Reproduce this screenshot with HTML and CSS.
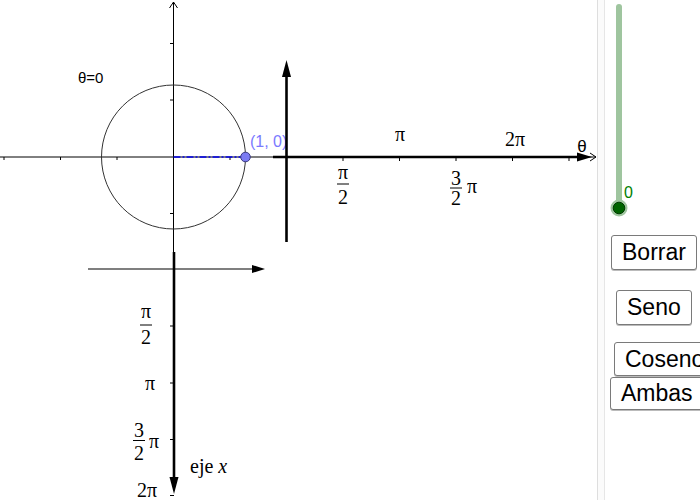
FILE: index.html
```html
<!DOCTYPE html>
<html>
<head>
<meta charset="utf-8">
<link rel="stylesheet" href="styles.css">
</head>
<body>
<div class="app">
  <svg class="board" width="597" height="500" viewBox="0 0 597 500">
    <!-- main thin axes -->
    <line class="thin" x1="0" y1="157" x2="596" y2="157"/>
    <polyline class="open" points="590,153 596,157 590,161"/>
    <line class="thin" x1="173.5" y1="2" x2="173.5" y2="255"/>
    <polyline class="open" points="169.5,8 173.5,2 177.5,8"/>
    <g class="thin">
      <line x1="4" y1="157" x2="4" y2="160"/>
      <line x1="60.5" y1="157" x2="60.5" y2="160"/>
      <line x1="117" y1="157" x2="117" y2="160"/>
      <line x1="230" y1="157" x2="230" y2="160"/>
      <line x1="170" y1="43.5" x2="173.5" y2="43.5"/>
      <line x1="170" y1="100" x2="173.5" y2="100"/>
      <line x1="170" y1="213.5" x2="173.5" y2="213.5"/>
    </g>
    <circle class="unit" cx="173.5" cy="157" r="72"/>
    <line class="dash" x1="173.5" y1="157" x2="245" y2="157"/>
    <circle class="pt" cx="245.5" cy="157" r="4.8"/>
    <text class="ptlabel" x="250" y="147">(1, 0)</text>
    <text class="sans" x="78" y="83">θ=0</text>

    <!-- theta axis -->
    <line class="thick" x1="273" y1="157" x2="580" y2="157"/>
    <polygon class="head" points="577,152.5 592,157 577,161.5"/>
    <line class="thick" x1="286.5" y1="242" x2="286.5" y2="72"/>
    <polygon class="head" points="286.5,60 282,77 291,77"/>
    <g class="thin">
      <line x1="343" y1="157" x2="343" y2="161"/>
      <line x1="399.5" y1="157" x2="399.5" y2="161"/>
      <line x1="456" y1="157" x2="456" y2="161"/>
      <line x1="512.5" y1="157" x2="512.5" y2="161"/>
      <line x1="569" y1="157" x2="569" y2="161"/>
    </g>
    <text class="math mid" x="400" y="141">π</text>
    <text class="math mid" x="515" y="146">2π</text>
    <text class="sans mid big" x="582" y="152">θ</text>
    <text class="math mid" x="343" y="179">π</text>
    <line class="frac" x1="337" y1="184" x2="349" y2="184"/>
    <text class="math mid" x="343" y="204">2</text>
    <text class="math mid" x="456" y="185">3</text>
    <line class="frac" x1="450" y1="188" x2="462" y2="188"/>
    <text class="math mid" x="456" y="205">2</text>
    <text class="math mid" x="472" y="193">π</text>

    <!-- x axis (vertical, downward) -->
    <line class="gray" x1="88" y1="269" x2="254" y2="269"/>
    <polygon class="head" points="252,265 265,269 252,273"/>
    <line class="thick" x1="174" y1="252" x2="174" y2="480"/>
    <polygon class="head" points="169.5,477 174,494 178.5,477"/>
    <g class="thin">
      <line x1="170" y1="326" x2="174" y2="326"/>
      <line x1="170" y1="383" x2="174" y2="383"/>
      <line x1="170" y1="439.5" x2="174" y2="439.5"/>
      <line x1="170" y1="495.5" x2="174" y2="495.5"/>
    </g>
    <text class="math mid" x="146" y="318">π</text>
    <line class="frac" x1="140" y1="325" x2="152" y2="325"/>
    <text class="math mid" x="146" y="344">2</text>
    <text class="math mid" x="150" y="390">π</text>
    <text class="math mid" x="139" y="437">3</text>
    <line class="frac" x1="133" y1="440.5" x2="145" y2="440.5"/>
    <text class="math mid" x="139" y="460">2</text>
    <text class="math mid" x="154" y="448">π</text>
    <text class="math mid" x="147" y="497">2π</text>
    <text class="math" x="190" y="473">eje <tspan class="ital">x</tspan></text>
  </svg>
  <div class="divider"></div>
  <div class="panel">
    <svg class="slider" width="95" height="225" viewBox="0 0 95 225">
      <line class="track" x1="14" y1="7" x2="14" y2="208"/>
      <circle class="knob-ring" cx="14" cy="208" r="8.5"/>
      <circle class="knob" cx="14" cy="208" r="5.8"/>
      <text class="val" x="19" y="198">0</text>
    </svg>
    <button class="btn b-borrar">Borrar</button>
    <button class="btn b-seno">Seno</button>
    <button class="btn b-coseno">Coseno</button>
    <button class="btn b-ambas">Ambas</button>
  </div>
</div>
</body>
</html>
```
FILE: styles.css
```css
html, body {
  margin: 0;
  padding: 0;
  background: #ffffff;
}
.app {
  display: flex;
  width: 700px;
  height: 500px;
  overflow: hidden;
}
.board {
  flex: 0 0 597px;
  display: block;
}
.thin {
  stroke: #000;
  stroke-width: 1;
  fill: none;
}
.open {
  stroke: #000;
  stroke-width: 1;
  fill: none;
}
.gray {
  stroke: #555;
  stroke-width: 1.6;
}
.thick {
  stroke: #000;
  stroke-width: 2.6;
}
.head {
  fill: #000;
}
.unit {
  fill: none;
  stroke: #333;
  stroke-width: 1;
}
.dash {
  stroke: #0000f0;
  stroke-width: 1.5;
  stroke-dasharray: 7 2 2 2;
}
.pt {
  fill: #7b7bf2;
  stroke: #3a3a80;
  stroke-width: 1;
}
.ptlabel {
  font-family: "Liberation Sans", Arial, sans-serif;
  font-size: 16px;
  fill: #7a7aff;
}
.sans {
  font-family: "Liberation Sans", Arial, sans-serif;
  font-size: 15px;
  fill: #000;
}
.big {
  font-size: 17px;
}
.math {
  font-family: "Liberation Serif", "DejaVu Serif", "Times New Roman", serif;
  font-size: 20px;
  fill: #000;
}
.ital {
  font-style: italic;
}
.mid {
  text-anchor: middle;
}
.frac {
  stroke: #000;
  stroke-width: 1;
}
.divider {
  flex: 0 0 6px;
  border-left: 1px solid #dedede;
  border-right: 1px solid #e6e6e6;
  background: #fbfbfb;
}
.panel {
  flex: 1 0 95px;
  display: flex;
  flex-direction: column;
  align-items: flex-start;
  overflow: hidden;
}
.slider {
  display: block;
  flex: 0 0 225px;
}
.track {
  stroke: #9fc59f;
  stroke-width: 6;
  stroke-linecap: round;
}
.knob-ring {
  fill: #9fc59f;
}
.knob {
  fill: #006400;
  stroke: #003a00;
  stroke-width: 1;
}
.val {
  font-family: "Liberation Sans", Arial, sans-serif;
  font-size: 16px;
  fill: #008000;
}
.btn {
  flex: 0 0 auto;
  box-sizing: border-box;
  height: 35px;
  padding: 0 10px;
  margin: 0;
  border: 1px solid #7a7a7a;
  border-radius: 3px;
  background: #ffffff;
  color: #000;
  font-family: "Liberation Sans", Arial, sans-serif;
  font-size: 23px;
  line-height: 33px;
  white-space: nowrap;
  box-shadow: 0 1px 0 #bbb;
}
.b-borrar {
  margin-top: 10px;
  margin-left: 6px;
}
.b-seno {
  margin-top: 20px;
  margin-left: 11px;
}
.b-coseno {
  margin-top: 17px;
  margin-left: 9px;
  height: 34px;
}
.b-ambas {
  margin-top: 1px;
  margin-left: 5px;
  padding-right: 22px;
  height: 33px;
  line-height: 31px;
}
```
